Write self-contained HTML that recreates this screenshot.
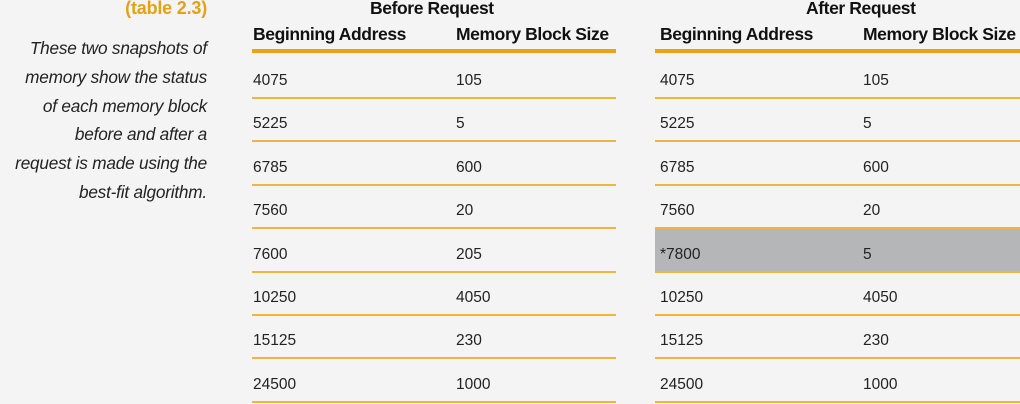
<!DOCTYPE html>
<html><head><meta charset="utf-8"><style>
html,body{margin:0;padding:0}
body{width:1020px;height:404px;background:#f4f4f4;position:relative;overflow:hidden;font-family:"Liberation Sans",sans-serif;color:#1a1a1a}
.a{position:absolute;white-space:nowrap}
.t{font-weight:bold;font-size:18px;letter-spacing:-0.2px;color:#e3a11a;right:813px;top:-2px}
.cap{position:absolute;right:813px;top:34px;text-align:right;font-style:italic;font-size:17.2px;line-height:28.8px;letter-spacing:-0.2px;color:#222}
.h{font-weight:bold;font-size:17.5px;letter-spacing:-0.4px;color:#111}
.thick{position:absolute;height:4px;background:#e8a317}
.thin{position:absolute;height:2px;background:#efb53f}
.c{font-size:15.5px;color:#222}
.g{position:absolute;background:#b5b6b8}
</style></head><body>
<div class="a t">(table 2.3)</div>
<div class="cap">These two snapshots of<br>memory show the status<br>of each memory block<br>before and after a<br>request is made using the<br>best-fit algorithm.</div>

<div class="a h" style="left:370px;top:-2px">Before Request</div>
<div class="a h" style="left:806px;top:-2px">After Request</div>
<div class="a h" style="left:253px;top:24px">Beginning Address</div>
<div class="a h" style="left:456px;top:24px">Memory Block Size</div>
<div class="a h" style="left:660px;top:24px">Beginning Address</div>
<div class="a h" style="left:863px;top:24px">Memory Block Size</div>
<div class="thick" style="left:252px;top:49px;width:364px"></div>
<div class="thick" style="left:655px;top:49px;width:365px"></div>

<div class="g" style="left:655px;top:228px;width:365px;height:43px"></div>

<div id="rows"></div>
<script>
var a=["4075","5225","6785","7560","7600","10250","15125","24500"];
var b=["105","5","600","20","205","4050","230","1000"];
var a2=a.slice();a2[4]="*7800";var b2=b.slice();b2[4]="5";
var h="";
for(var i=0;i<8;i++){
 var y=Math.round(97+i*43.4);
 var ty=y-25;
 h+='<div class="thin" style="left:252px;top:'+y+'px;width:364px"></div>';
 h+='<div class="thin" style="left:655px;top:'+y+'px;width:365px"></div>';
 h+='<div class="a c" style="left:253px;top:'+ty+'px">'+a[i]+'</div>';
 h+='<div class="a c" style="left:456px;top:'+ty+'px">'+b[i]+'</div>';
 h+='<div class="a c" style="left:660px;top:'+ty+'px">'+a2[i]+'</div>';
 h+='<div class="a c" style="left:863px;top:'+ty+'px">'+b2[i]+'</div>';
}
document.getElementById("rows").innerHTML=h;
</script>
</body></html>
